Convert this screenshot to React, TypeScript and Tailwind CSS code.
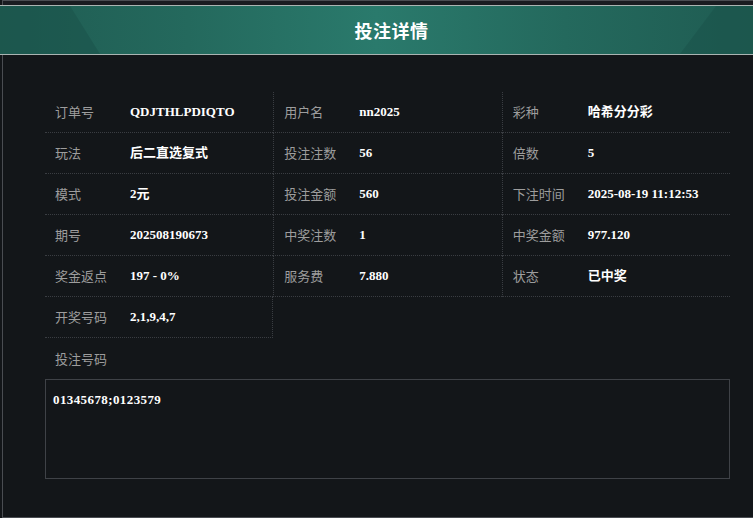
import type { FC } from 'react';

interface Field {
  label: string;
  value: string;
}

const fields: Field[] = [
  { label: '订单号', value: 'QDJTHLPDIQTO' },
  { label: '用户名', value: 'nn2025' },
  { label: '彩种', value: '哈希分分彩' },
  { label: '玩法', value: '后二直选复式' },
  { label: '投注注数', value: '56' },
  { label: '倍数', value: '5' },
  { label: '模式', value: '2元' },
  { label: '投注金额', value: '560' },
  { label: '下注时间', value: '2025-08-19 11:12:53' },
  { label: '期号', value: '202508190673' },
  { label: '中奖注数', value: '1' },
  { label: '中奖金额', value: '977.120' },
  { label: '奖金返点', value: '197 - 0%' },
  { label: '服务费', value: '7.880' },
  { label: '状态', value: '已中奖' },
  { label: '开奖号码', value: '2,1,9,4,7' },
];

const sans = "font-['Noto_Sans_CJK_SC','Microsoft_YaHei',sans-serif]";
const serif = "font-['Liberation_Serif','Noto_Sans_CJK_SC',serif]";

const HeaderDecor: FC = () => (
  <svg className="absolute inset-0 h-full w-full" viewBox="0 0 753 48" preserveAspectRatio="none">
    <polygon points="0,0 70,0 100,48 0,48" fill="#1b544b" opacity="0.6" />
    <polygon points="716,0 753,0 753,48 680,48" fill="#1b544b" opacity="0.6" />
  </svg>
);

const App: FC = () => {
  return (
    <div className={`w-[753px] h-[518px] bg-[#131619] ${sans} overflow-hidden`}>
      {/* strip above the header */}
      <div className="ml-[2px] h-[5px] border-l border-t border-[#4a4d52] bg-[#1a1c21]" />

      {/* title bar */}
      <div className="relative h-[50px] border-y border-[#aab4b2] bg-[linear-gradient(90deg,#1f5c52_0%,#24695d_25%,#2a7a6c_50%,#24695d_75%,#1f5c52_100%)]">
        <HeaderDecor />
        <div className="relative flex h-full items-center justify-center pl-[30px]">
          <h2 className="text-[18px] font-bold text-white tracking-[0.5px]">投注详情</h2>
        </div>
      </div>

      {/* body */}
      <div className="ml-[2px] h-[463px] border-l border-b border-[#4a4d52] pl-[42px] pt-[37px]">
        <div className="grid w-[685px] grid-cols-3">
          {fields.map((f, i) => {
            const col = i % 3;
            const last = i === fields.length - 1;
            return (
              <div
                key={f.label}
                className={`flex h-[41px] items-center border-b border-dotted border-[#3a3d42] ${
                  col > 0 ? 'border-l' : ''
                } ${last ? 'border-r' : ''}`}
              >
                <span className="w-[75px] pl-[10px] shrink-0 text-[13px] text-[#9d9d9d] whitespace-nowrap">
                  {f.label}
                </span>
                <span className={`${serif} pl-[10px] text-[13px] font-bold text-white whitespace-nowrap`}>
                  {f.value}
                </span>
              </div>
            );
          })}
        </div>

        <div className="flex h-[41px] items-center pl-[10px] text-[13px] text-[#9d9d9d]">投注号码</div>

        <div className="w-[685px] h-[100px] border border-[#3f4247] px-[7px] py-[10px]">
          <p className={`${serif} text-[13px] font-bold tracking-[0.4px] text-white`}>01345678;0123579</p>
        </div>
      </div>
    </div>
  );
};

export default App;
